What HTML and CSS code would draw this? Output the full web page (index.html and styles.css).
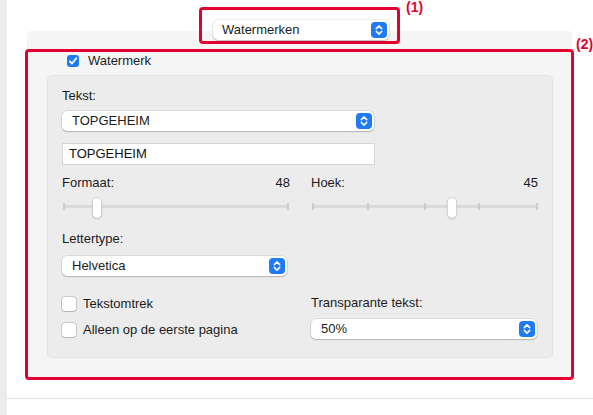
FILE: index.html
```html
<!DOCTYPE html>
<html lang="nl">
<head>
    <meta charset="UTF-8" />
    <meta name="viewport" content="width=device-width, initial-scale=1.0"/>
    <title>Watermerken</title>
    <link rel="stylesheet" href="styles.css">
</head>
<body>

<div class="strip"></div>

<div class="main">
    <div class="content">

        <!-- Tab selector on top of the panel -->
        <div class="tabbar">
            <div class="mark mark-1">
                <div class="popup popup-tab">
                    <span class="popup-label">Watermerken</span>
                    <span class="stepper">
                        <svg width="16" height="16" viewBox="0 0 16 16"><path d="M5.3 6.6 L8 3.9 L10.7 6.6 M5.3 9.4 L8 12.1 L10.7 9.4" fill="none" stroke="#fff" stroke-width="1.5" stroke-linecap="round" stroke-linejoin="round"/></svg>
                    </span>
                </div>
                <span class="callout callout-1">(1)</span>
            </div>
        </div>

        <div class="panel">
            <div class="mark mark-2">
                <span class="callout callout-2">(2)</span>

                <label class="check check-title">
                    <span class="box box-on">
                        <svg width="12" height="12" viewBox="0 0 12 12"><path d="M2.8 6.3 L5 8.5 L9.3 3.3" fill="none" stroke="#fff" stroke-width="1.8" stroke-linecap="round" stroke-linejoin="round"/></svg>
                    </span>
                    Watermerk
                </label>

                <div class="group">
                    <div class="label">Tekst:</div>
                    <div class="popup popup-wide">
                        <span class="popup-label">TOPGEHEIM</span>
                        <span class="stepper">
                            <svg width="16" height="16" viewBox="0 0 16 16"><path d="M5.3 6.6 L8 3.9 L10.7 6.6 M5.3 9.4 L8 12.1 L10.7 9.4" fill="none" stroke="#fff" stroke-width="1.5" stroke-linecap="round" stroke-linejoin="round"/></svg>
                        </span>
                    </div>
                    <div class="field">TOPGEHEIM</div>

                    <div class="cols cols-labels">
                        <div class="value-row"><span>Formaat:</span><span>48</span></div>
                        <div class="value-row"><span>Hoek:</span><span>45</span></div>
                    </div>

                    <div class="cols cols-sliders">
                        <div class="slider">
                            <div class="track">
                                <span class="tick" style="left: 0%"></span>
                                <span class="tick" style="left: 100%"></span>
                                <span class="thumb" style="left: 15%"></span>
                            </div>
                        </div>
                        <div class="slider">
                            <div class="track">
                                <span class="tick" style="left: 0%"></span>
                                <span class="tick" style="left: 25.5%"></span>
                                <span class="tick" style="left: 50%"></span>
                                <span class="tick" style="left: 74%"></span>
                                <span class="tick" style="left: 100%"></span>
                                <span class="thumb" style="left: 62%"></span>
                            </div>
                        </div>
                    </div>

                    <div class="cols cols-font">
                        <div>
                            <div class="label">Lettertype:</div>
                            <div class="popup popup-font">
                                <span class="popup-label">Helvetica</span>
                                <span class="stepper">
                                    <svg width="16" height="16" viewBox="0 0 16 16"><path d="M5.3 6.6 L8 3.9 L10.7 6.6 M5.3 9.4 L8 12.1 L10.7 9.4" fill="none" stroke="#fff" stroke-width="1.5" stroke-linecap="round" stroke-linejoin="round"/></svg>
                                </span>
                            </div>
                        </div>
                        <div></div>
                    </div>

                    <div class="cols cols-bottom">
                        <div class="checks">
                            <label class="check"><span class="box"></span>Tekstomtrek</label>
                            <label class="check"><span class="box"></span>Alleen op de eerste pagina</label>
                        </div>
                        <div>
                            <div class="label">Transparante tekst:</div>
                            <div class="popup popup-transp">
                                <span class="popup-label">50%</span>
                                <span class="stepper">
                                    <svg width="16" height="16" viewBox="0 0 16 16"><path d="M5.3 6.6 L8 3.9 L10.7 6.6 M5.3 9.4 L8 12.1 L10.7 9.4" fill="none" stroke="#fff" stroke-width="1.5" stroke-linecap="round" stroke-linejoin="round"/></svg>
                                </span>
                            </div>
                        </div>
                    </div>
                </div>
            </div>
        </div>

    </div>
    <div class="rule"></div>
</div>

</body>
</html>
```

FILE: styles.css
```css
* {
    box-sizing: border-box;
}
html, body {
    margin: 0;
    height: 100%;
}
body {
    display: flex;
    font-family: "Liberation Sans", Arial, sans-serif;
    font-size: 13px;
    line-height: 16px;
    color: #1c1c1c;
    background: #fff;
    overflow: hidden;
}
.strip {
    flex: none;
    width: 7px;
    background: #ececec;
}
.main {
    flex: 1;
}
.content {
    padding: 7px 22px 0 20px;
}

/* red annotation frames */
.mark {
    position: relative;
    border: 3px solid #e4002f;
    border-radius: 4px;
}
.mark-1 {
    padding: 10px 8px 1px 11px;
}
.mark-2 {
    margin: 0 -2px -3px;
    padding: 1px 18px 19px 19px;
}
.callout {
    position: absolute;
    color: #e4002f;
    font-weight: bold;
    font-size: 14px;
    line-height: 15px;
}
.callout-1 {
    left: 100%;
    top: -10px;
    margin-left: 9px;
}
.callout-2 {
    left: 100%;
    top: -15px;
    margin-left: 5px;
}

.tabbar {
    position: relative;
    z-index: 1;
    display: flex;
    justify-content: center;
}
.panel {
    margin-top: -13px;
    padding-top: 18px;
    background: #f5f5f5;
    border-radius: 4px 4px 0 0;
}

/* popup buttons */
.popup {
    display: flex;
    align-items: center;
    height: 20px;
    padding-left: 10px;
    background: #fff;
    border-radius: 5px;
    box-shadow: 0 0 0 0.5px rgba(0, 0, 0, 0.14), 0 1px 1.5px rgba(0, 0, 0, 0.18);
}
.popup-label {
    flex: 1;
}
.stepper {
    display: flex;
    width: 16px;
    height: 16px;
    margin-right: 2px;
    border-radius: 4px;
    background: #1f7af5;
}
.popup-tab {
    width: 176px;
    padding-left: 9px;
}
.popup-wide {
    width: 312px;
    margin-top: 7px;
}
.popup-font {
    width: 225px;
    margin-top: 9px;
}
.popup-transp {
    width: 226px;
    margin-top: 8px;
}

/* checkboxes */
.check {
    display: flex;
    align-items: center;
    gap: 7px;
    height: 18px;
}
.check + .check {
    margin-top: 8px;
}
.check-title {
    height: 16px;
    gap: 9px;
    margin: 0 0 6px 20px;
}
.box {
    display: flex;
    width: 14px;
    height: 14px;
    border-radius: 3px;
    background: #fff;
    box-shadow: 0 0 0 0.5px rgba(0, 0, 0, 0.28), 0 0.5px 1px rgba(0, 0, 0, 0.12);
}
.box-on {
    width: 12px;
    height: 12px;
    background: #1f7af5;
    box-shadow: none;
}

/* inner group */
.group {
    padding: 12px 14px 18px;
    background: #ececec;
    border: 1px solid #e3e3e3;
    border-radius: 5px;
}
.field {
    width: 313px;
    height: 22px;
    margin-top: 12px;
    padding-left: 6px;
    line-height: 20px;
    color: #111;
    background: #fff;
    border: 1px solid #d6d6d6;
}
.cols {
    display: grid;
    grid-template-columns: 228px 227px;
    column-gap: 21px;
}
.cols-labels {
    margin-top: 10px;
}
.cols-sliders {
    margin-top: 7px;
}
.cols-font {
    margin-top: 13px;
}
.cols-bottom {
    margin-top: 19px;
}
.value-row {
    display: flex;
    justify-content: space-between;
}

/* sliders */
.slider {
    height: 20px;
    padding: 0 1px;
}
.track {
    position: relative;
    height: 20px;
}
.track::before {
    content: "";
    position: absolute;
    left: 0;
    right: 0;
    top: 7px;
    height: 3px;
    border-radius: 2px;
    background: #dadada;
}
.tick {
    position: absolute;
    top: 5px;
    width: 2px;
    height: 7px;
    margin-left: -1px;
    background: #cdcdcd;
}
.tick:first-child {
    margin-left: 0;
}
.tick:nth-child(2):not(:last-child),
.tick:last-of-type {
    margin-left: -2px;
}
.thumb {
    position: absolute;
    top: 0;
    width: 9px;
    height: 20px;
    transform: translateX(-50%);
    border-radius: 5px;
    background: #fff;
    box-shadow: 0 0 0 0.5px rgba(0, 0, 0, 0.15), 0 0.5px 2px rgba(0, 0, 0, 0.25);
}

.rule {
    margin-top: 21px;
    border-top: 1px solid #e2e2e2;
}
```
